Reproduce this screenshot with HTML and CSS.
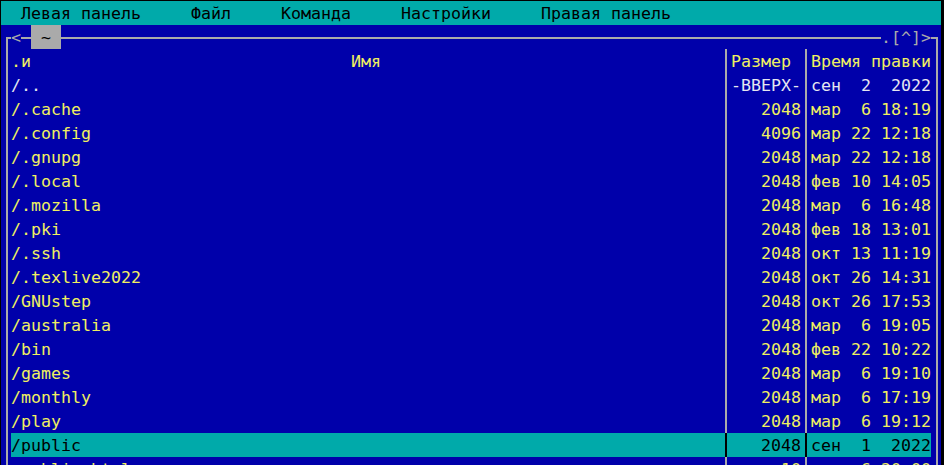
FILE: index.html
```html
<!DOCTYPE html>
<html lang="ru">
<head>
<meta charset="utf-8">
<title>Midnight Commander</title>
<link rel="stylesheet" href="styles.css">
</head>
<body>
<div class="screen">
  <div class="menubar">
    <span class="menu-item">Левая панель</span>
    <span class="menu-item">Файл</span>
    <span class="menu-item">Команда</span>
    <span class="menu-item">Настройки</span>
    <span class="menu-item">Правая панель</span>
  </div>
  <div class="panel">
    <div class="title">
      <div class="corner corner-l"></div>
      <div class="title-ch">&lt;</div>
      <div class="seg seg-short"></div>
      <div class="path"> ~ </div>
      <div class="seg seg-fill"></div>
      <div class="title-tail">.[^]&gt;</div>
      <div class="corner corner-r"></div>
    </div>
    <div class="list">
      <div class="row head">
        <div class="c-name">.и                                Имя</div>
        <div class="sep"></div>
        <div class="c-size">Размер</div>
        <div class="sep"></div>
        <div class="c-date">Время правки</div>
      </div>
      <div class="row updir">
        <div class="c-name">/..</div>
        <div class="sep"></div>
        <div class="c-size">-ВВЕРХ-</div>
        <div class="sep"></div>
        <div class="c-date">сен  2  2022</div>
      </div>
      <div class="row">
        <div class="c-name">/.cache</div><div class="sep"></div>
        <div class="c-size">2048</div><div class="sep"></div>
        <div class="c-date">мар  6 18:19</div>
      </div>
      <div class="row">
        <div class="c-name">/.config</div><div class="sep"></div>
        <div class="c-size">4096</div><div class="sep"></div>
        <div class="c-date">мар 22 12:18</div>
      </div>
      <div class="row">
        <div class="c-name">/.gnupg</div><div class="sep"></div>
        <div class="c-size">2048</div><div class="sep"></div>
        <div class="c-date">мар 22 12:18</div>
      </div>
      <div class="row">
        <div class="c-name">/.local</div><div class="sep"></div>
        <div class="c-size">2048</div><div class="sep"></div>
        <div class="c-date">фев 10 14:05</div>
      </div>
      <div class="row">
        <div class="c-name">/.mozilla</div><div class="sep"></div>
        <div class="c-size">2048</div><div class="sep"></div>
        <div class="c-date">мар  6 16:48</div>
      </div>
      <div class="row">
        <div class="c-name">/.pki</div><div class="sep"></div>
        <div class="c-size">2048</div><div class="sep"></div>
        <div class="c-date">фев 18 13:01</div>
      </div>
      <div class="row">
        <div class="c-name">/.ssh</div><div class="sep"></div>
        <div class="c-size">2048</div><div class="sep"></div>
        <div class="c-date">окт 13 11:19</div>
      </div>
      <div class="row">
        <div class="c-name">/.texlive2022</div><div class="sep"></div>
        <div class="c-size">2048</div><div class="sep"></div>
        <div class="c-date">окт 26 14:31</div>
      </div>
      <div class="row">
        <div class="c-name">/GNUstep</div><div class="sep"></div>
        <div class="c-size">2048</div><div class="sep"></div>
        <div class="c-date">окт 26 17:53</div>
      </div>
      <div class="row">
        <div class="c-name">/australia</div><div class="sep"></div>
        <div class="c-size">2048</div><div class="sep"></div>
        <div class="c-date">мар  6 19:05</div>
      </div>
      <div class="row">
        <div class="c-name">/bin</div><div class="sep"></div>
        <div class="c-size">2048</div><div class="sep"></div>
        <div class="c-date">фев 22 10:22</div>
      </div>
      <div class="row">
        <div class="c-name">/games</div><div class="sep"></div>
        <div class="c-size">2048</div><div class="sep"></div>
        <div class="c-date">мар  6 19:10</div>
      </div>
      <div class="row">
        <div class="c-name">/monthly</div><div class="sep"></div>
        <div class="c-size">2048</div><div class="sep"></div>
        <div class="c-date">мар  6 17:19</div>
      </div>
      <div class="row">
        <div class="c-name">/play</div><div class="sep"></div>
        <div class="c-size">2048</div><div class="sep"></div>
        <div class="c-date">мар  6 19:12</div>
      </div>
      <div class="row sel">
        <div class="c-name">/public</div><div class="sep"></div>
        <div class="c-size">2048</div><div class="sep"></div>
        <div class="c-date">сен  1  2022</div>
      </div>
      <div class="row">
        <div class="c-name"> public.html</div><div class="sep"></div>
        <div class="c-size">10</div><div class="sep"></div>
        <div class="c-date">мар  6 20:00</div>
      </div>
    </div>
  </div>
</div>
</body>
</html>
```
FILE: styles.css
```css
html, body {
  margin: 0;
  padding: 0;
  background: #000000;
  overflow: hidden;
  height: 465px;
}

.screen {
  margin: 1px 0 0 1px;
  width: 940px;
  height: 480px;
  background: #0000aa;
  font-family: "DejaVu Sans Mono", "Liberation Mono", monospace;
  font-size: 16.61px;
  line-height: 24px;
  color: #f0f060;
}

.menubar {
  display: flex;
  gap: 50px;
  height: 24px;
  padding-left: 20px;
  background: #00aaaa;
  color: #000000;
}

.menu-item,
.title-ch,
.path,
.title-tail,
.c-name,
.c-size,
.c-date {
  white-space: pre;
  line-height: 26px;
}

.title {
  display: flex;
  align-items: flex-start;
  height: 24px;
  margin: 0 3px 0 5px;
  color: #aaaaaa;
}

.corner {
  box-sizing: border-box;
  height: 12px;
  margin-top: 12px;
  border-top: 2px solid #aaaaaa;
}

.corner-l {
  width: 5px;
  border-left: 2px solid #aaaaaa;
}

.corner-r {
  width: 7px;
  border-right: 2px solid #aaaaaa;
}

.title-ch {
  width: 10px;
  height: 24px;
}

.seg {
  height: 2px;
  margin-top: 12px;
  background: #aaaaaa;
}

.seg-short {
  width: 10px;
}

.seg-fill {
  flex: 1;
}

.path {
  width: 30px;
  height: 24px;
  background: #aaaaaa;
  color: #000000;
}

.title-tail {
  width: 50px;
  height: 24px;
}

.list {
  margin: 0 3px 0 5px;
  border-left: 2px solid #aaaaaa;
  border-right: 2px solid #aaaaaa;
  padding: 0 5px 0 3px;
}

.row {
  display: flex;
  height: 24px;
  overflow: hidden;
}

.c-name {
  width: 710px;
  overflow: hidden;
}

.c-size {
  width: 70px;
  text-align: right;
}

.c-date {
  width: 120px;
}

.sep {
  width: 10px;
  background: linear-gradient(to right, transparent 4px, #aaaaaa 4px, #aaaaaa 6px, transparent 6px);
}

.head .c-size {
  text-align: left;
}

.updir {
  color: #e6e6f0;
}

.sel {
  background: #00aaaa;
  color: #000000;
}

.sel .sep {
  background: linear-gradient(to right, transparent 4px, #000000 4px, #000000 6px, transparent 6px);
}
```
